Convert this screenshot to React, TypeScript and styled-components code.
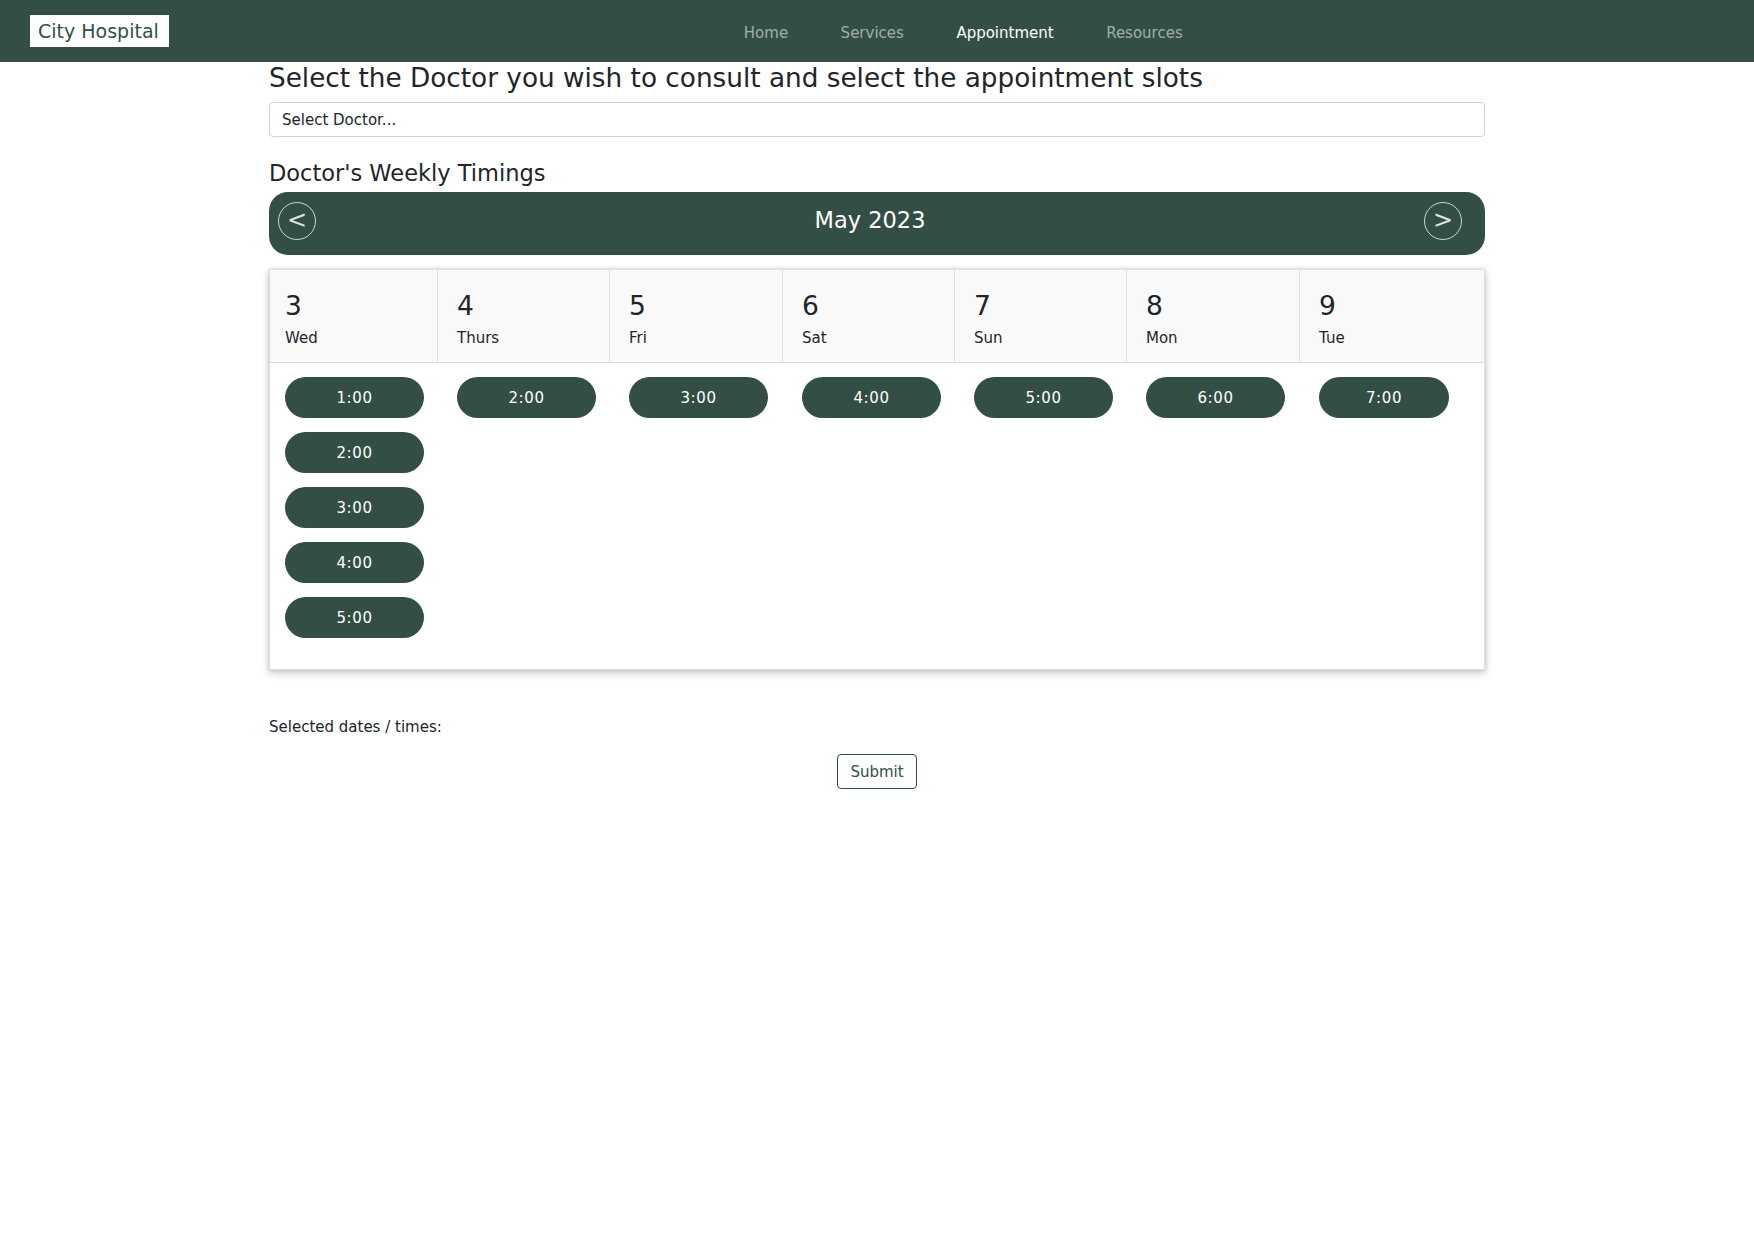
import React from "react";
import styled, { createGlobalStyle } from "styled-components";

const GREEN = "#334f45";

const Global = createGlobalStyle`
  html, body { margin: 0; padding: 0; background: #fff; }
  body { font-family: "DejaVu Sans", Verdana, sans-serif; color: #212529; }
  * { box-sizing: border-box; }
`;

const NavBar = styled.nav`
  height: 62px;
  background: ${GREEN};
  display: flex;
  align-items: center;
  padding: 0 30px;
`;

const Brand = styled.div`
  background: #fff;
  color: ${GREEN};
  font-size: 19px;
  line-height: 32px;
  height: 32px;
  padding: 0 10px 0 8px;
`;

const NavLinks = styled.ul`
  list-style: none;
  margin: 3px 0 0 575px;
  padding: 0;
  display: flex;
  gap: 52.5px;
`;

const NavLink = styled.li<{ $active?: boolean }>`
  font-size: 15px;
  line-height: 24px;
  color: ${(p) => (p.$active ? "#ffffff" : "rgba(255,255,255,0.55)")};
`;

const Container = styled.main`
  width: 1216px;
  margin: 0 auto;
  display: flex;
  flex-direction: column;
`;

const Title = styled.h3`
  font-size: 26.3px;
  font-weight: 400;
  line-height: 32px;
  margin: 0 0 8px;
`;

const Select = styled.div`
  height: 35px;
  border: 1px solid #ced4da;
  border-radius: 4px;
  display: flex;
  align-items: center;
  padding: 0 12px;
  font-size: 15px;
  color: #212529;
  margin-bottom: 22px;
`;

const SubTitle = styled.h4`
  font-size: 22.5px;
  font-weight: 400;
  line-height: 28px;
  margin: 0 0 5px;
`;

const MonthBar = styled.div`
  height: 63px;
  background: ${GREEN};
  border-radius: 19px;
  display: flex;
  align-items: center;
  justify-content: space-between;
  padding: 0 23px 5px 9px;
`;

const MonthLabel = styled.div`
  color: #fff;
  font-size: 22.5px;
  line-height: 28px;
  margin-top: -2px;
`;

const ArrowButton = styled.button`
  width: 38px;
  height: 38px;
  border-radius: 50%;
  border: 1px solid rgba(255, 255, 255, 0.75);
  background: transparent;
  color: rgba(255, 255, 255, 0.85);
  font-family: "DejaVu Sans", sans-serif;
  font-size: 24px;
  line-height: 1;
  padding: 0 0 2px;
  display: flex;
  align-items: center;
  justify-content: center;
`;

const Card = styled.section`
  margin-top: 14px;
  border: 1px solid #dedede;
  box-shadow: 0 3px 8px rgba(0, 0, 0, 0.22), 0 0 4px rgba(0, 0, 0, 0.12);
  display: grid;
  grid-template-columns: 168px 172px 173px 172px 172px 173px 1fr;
  grid-template-rows: auto 1fr;
`;

const DayHead = styled.div<{ $first?: boolean; $last?: boolean }>`
  background: #f9f9f9;
  border-bottom: 1px solid #dedede;
  border-right: ${(p) => (p.$last ? "none" : "1px solid #e2e2e2")};
  padding: 19px 0 12px ${(p) => (p.$first ? "15px" : "19px")};
  display: flex;
  flex-direction: column;
`;

const DayNum = styled.div`
  font-size: 26.5px;
  line-height: 34px;
`;

const DayName = styled.div`
  font-size: 15px;
  line-height: 24px;
  margin-top: 3px;
`;

const SlotColumn = styled.div<{ $first?: boolean }>`
  padding: 14px 0 31px ${(p) => (p.$first ? "15px" : "19px")};
  display: flex;
  flex-direction: column;
  gap: 14px;
`;

const Slot = styled.button<{ $w: number }>`
  width: ${(p) => p.$w}px;
  height: 41px;
  border: none;
  border-radius: 21px;
  background: ${GREEN};
  color: #fff;
  font-family: "DejaVu Sans", sans-serif;
  font-size: 15px;
  letter-spacing: 0.6px;
  cursor: pointer;
`;

const SelectedText = styled.p`
  font-size: 15px;
  line-height: 24px;
  margin: 45px 0 15px;
`;

const SubmitRow = styled.div`
  display: flex;
  justify-content: center;
`;

const SubmitButton = styled.button`
  height: 35px;
  padding: 0 12px;
  border: 1px solid ${GREEN};
  border-radius: 4px;
  background: #fff;
  color: ${GREEN};
  font-family: "DejaVu Sans", sans-serif;
  font-size: 15px;
`;

const days = [
  { num: 3, name: "Wed", slots: ["1:00", "2:00", "3:00", "4:00", "5:00"], w: 139 },
  { num: 4, name: "Thurs", slots: ["2:00"], w: 139 },
  { num: 5, name: "Fri", slots: ["3:00"], w: 139 },
  { num: 6, name: "Sat", slots: ["4:00"], w: 139 },
  { num: 7, name: "Sun", slots: ["5:00"], w: 139 },
  { num: 8, name: "Mon", slots: ["6:00"], w: 139 },
  { num: 9, name: "Tue", slots: ["7:00"], w: 130 },
];

export default function App() {
  return (
    <>
      <Global />
      <NavBar>
        <Brand>City Hospital</Brand>
        <NavLinks>
          <NavLink>Home</NavLink>
          <NavLink>Services</NavLink>
          <NavLink $active>Appointment</NavLink>
          <NavLink>Resources</NavLink>
        </NavLinks>
      </NavBar>
      <Container>
        <Title>Select the Doctor you wish to consult and select the appointment slots</Title>
        <Select>Select Doctor...</Select>
        <SubTitle>Doctor's Weekly Timings</SubTitle>
        <MonthBar>
          <ArrowButton>&lt;</ArrowButton>
          <MonthLabel>May 2023</MonthLabel>
          <ArrowButton>&gt;</ArrowButton>
        </MonthBar>
        <Card>
          {days.map((d, i) => (
            <DayHead key={"h" + d.num} $first={i === 0} $last={i === days.length - 1}>
              <DayNum>{d.num}</DayNum>
              <DayName>{d.name}</DayName>
            </DayHead>
          ))}
          {days.map((d, i) => (
            <SlotColumn key={"s" + d.num} $first={i === 0}>
              {d.slots.map((s) => (
                <Slot key={s} $w={d.w}>
                  {s}
                </Slot>
              ))}
            </SlotColumn>
          ))}
        </Card>
        <SelectedText>Selected dates / times:</SelectedText>
        <SubmitRow>
          <SubmitButton>Submit</SubmitButton>
        </SubmitRow>
      </Container>
    </>
  );
}
